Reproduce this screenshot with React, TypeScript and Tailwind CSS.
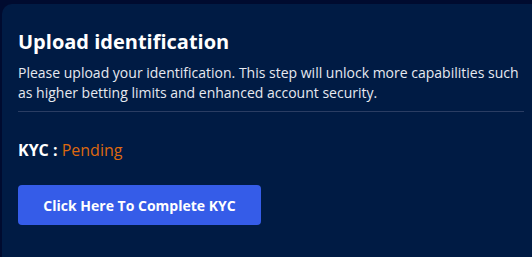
const App = () => {
  return (
    <div className="h-[257px] w-[532px] overflow-hidden bg-[#000b2f] pl-[2px] pt-[4px] font-['Open_Sans',sans-serif]">
      <div className="w-[540px] h-[280px] rounded-tl-[10px] bg-[#001b44] px-4 pt-[24px]">
        <h2 className="text-[20px] font-bold leading-[28px] text-white">Upload identification</h2>
        <p className="mt-[7px] text-[14px] leading-[20px] text-[#e6e9f0]">
          Please upload your identification. This step will unlock more capabilities such as higher betting limits and enhanced account security.
        </p>
        <div className="mt-[8px] h-px w-[506px] bg-[#2a3d63]" />
        <div className="mt-[26px] text-[16px] leading-[24px]">
          <span className="font-bold text-white">KYC : </span>
          <span className="text-[#dd680f]">Pending</span>
        </div>
        <button className="mt-[23px] h-10 w-[243px] rounded-[4px] bg-[#355ce8] text-[14px] font-bold text-white">
          Click Here To Complete KYC
        </button>
      </div>
    </div>
  );
};

export default App;
